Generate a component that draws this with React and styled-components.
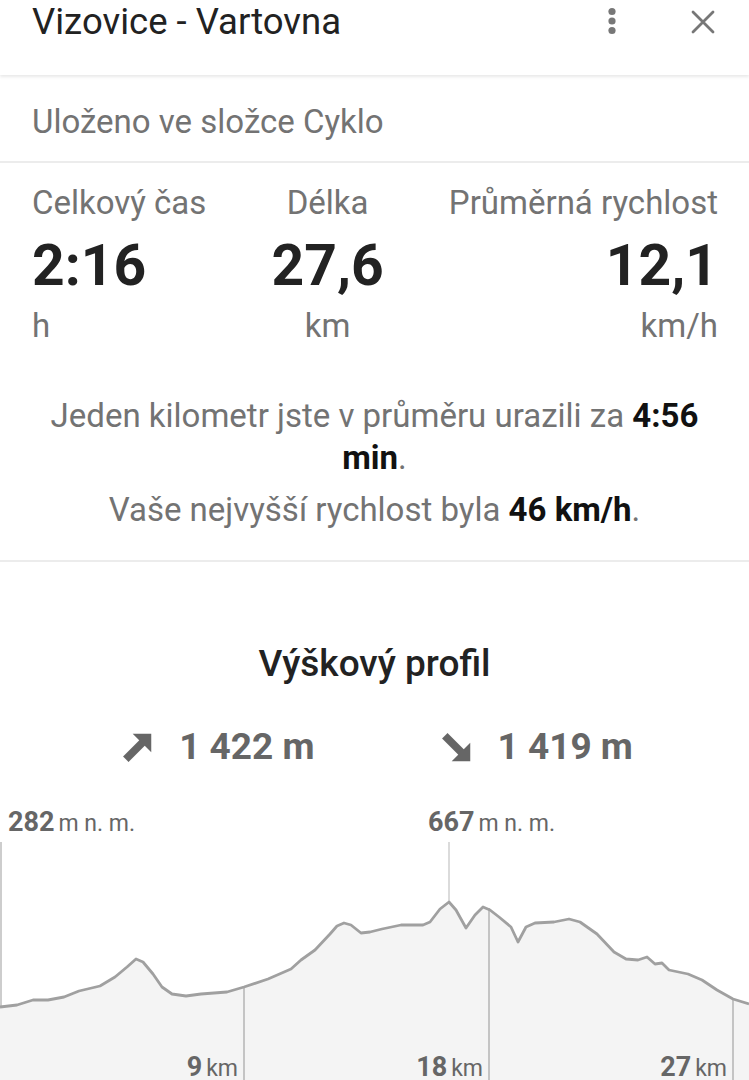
import React from "react";
import styled, { createGlobalStyle } from "styled-components";

const Global = createGlobalStyle`
  html, body {
    margin: 0;
    padding: 0;
    background: #fff;
  }
  body {
    font-family: Roboto, "Liberation Sans", sans-serif;
    -webkit-font-smoothing: antialiased;
  }
  #root {
    width: 749px;
    height: 1080px;
    overflow: hidden;
  }
`;

const Page = styled.div`
  width: 749px;
  height: 1080px;
  background: #fff;
`;

const Header = styled.header`
  height: 75px;
  display: flex;
  align-items: flex-start;
  padding: 0 0 0 32px;
  box-shadow: 0 2px 3px rgba(0, 0, 0, 0.09);
  position: relative;
  z-index: 1;
`;

const Title = styled.h1`
  flex: 1;
  margin: 0;
  font-size: 36.5px;
  font-weight: 400;
  line-height: 44px;
  color: #222;
`;

const IconButton = styled.button`
  width: 48px;
  height: 44px;
  border: 0;
  padding: 0;
  background: none;
  display: flex;
  align-items: center;
  justify-content: center;
  color: #777;
`;

const Actions = styled.div`
  display: flex;
  gap: 43px;
  margin-right: 22px;
`;

const Folder = styled.div`
  height: 88px;
  box-sizing: border-box;
  padding: 6px 32px 0;
  display: flex;
  align-items: center;
  font-size: 33px;
  color: #737373;
  border-bottom: 2px solid #ececec;
`;

const Stats = styled.div`
  display: flex;
  justify-content: space-between;
  padding: 20px 31px 0 32px;
`;

const Stat = styled.div`
  display: flex;
  flex-direction: column;
  align-items: ${(p) => p.$align};
`;

const StatLabel = styled.div`
  font-size: 33px;
  line-height: 40px;
  color: #737373;
`;

const StatValue = styled.div`
  font-size: 57px;
  font-weight: 700;
  line-height: 66px;
  margin-top: 10px;
  color: #222;
`;

const StatUnit = styled.div`
  font-size: 33px;
  line-height: 40px;
  margin-top: 7px;
  color: #737373;
`;

const Summary = styled.div`
  padding: 49px 36px 29px;
  text-align: center;
  border-bottom: 2px solid #ececec;
`;

const Line = styled.p`
  margin: ${(p) => (p.$first ? "0" : "10px 0 0")};
  font-size: 33px;
  line-height: 42px;
  color: #737373;

  b {
    color: #111;
    font-weight: 700;
  }
`;

const Profile = styled.section`
  padding-top: 80px;
`;

const ProfileTitle = styled.h2`
  margin: 0;
  text-align: center;
  font-size: 37px;
  font-weight: 500;
  line-height: 44px;
  color: #222;
`;

const Climb = styled.div`
  margin-top: 39px;
  display: flex;
  justify-content: center;
  gap: 125px;
  padding-left: 5px;
`;

const ClimbItem = styled.div`
  display: flex;
  align-items: center;
  gap: 25px;
  font-size: 37px;
  font-weight: 700;
  line-height: 44px;
  color: #666;
`;

const Chart = styled.div`
  position: relative;
  margin-top: 33px;
  height: 275px;
`;

const Svg = styled.svg`
  position: absolute;
  left: 0;
  top: 40px;
  display: block;
`;

const Tag = styled.div`
  position: absolute;
  left: ${(p) => p.$x}px;
  top: ${(p) => p.$y}px;
  white-space: nowrap;
  color: #666;
  font-size: 23px;
  line-height: 30px;

  b {
    font-size: 27px;
    font-weight: 700;
    margin-right: 4px;
  }
`;

const KmTag = styled(Tag)`
  left: auto;
  right: ${(p) => 749 - p.$x}px;
`;

const Dots = () => (
  <svg width="10" height="30" viewBox="0 0 10 30">
    <circle cx="5" cy="4.5" r="3.6" fill="#777" />
    <circle cx="5" cy="14" r="3.6" fill="#777" />
    <circle cx="5" cy="23.5" r="3.6" fill="#777" />
  </svg>
);

const Close = () => (
  <svg width="24" height="24" viewBox="0 0 24 24">
    <path d="M2 2 L22 22 M22 2 L2 22" stroke="#777" strokeWidth="2.8" strokeLinecap="round" />
  </svg>
);

const Arrow = ({ down }) => (
  <svg width="33" height="33" viewBox="0 0 24 24" style={{ transform: down ? "scaleY(-1)" : undefined }}>
    <polygon points="8.5,2 22,2 22,15.5" fill="#666" />
    <path d="M3.5 20.5 L16 8" stroke="#666" strokeWidth="5.6" />
  </svg>
);

const profile = [
  [0, 165], [17, 163], [33, 158], [48, 158], [64, 155], [79, 149], [100, 144],
  [115, 135], [127, 125], [136, 117], [143, 120], [153, 132], [162, 145], [172, 152],
  [186, 154], [201, 152], [227, 150], [244, 145], [268, 137], [291, 127], [301, 118],
  [315, 108], [330, 92], [337, 84], [344, 81], [351, 83], [361, 91], [370, 90],
  [382, 87], [401, 83], [423, 83], [430, 80], [440, 67], [449, 60], [456, 68],
  [466, 86], [475, 73], [483, 65], [490, 68], [499, 75], [511, 85], [518, 100],
  [526, 85], [535, 81], [554, 80], [569, 77], [580, 80], [597, 92], [614, 110],
  [626, 117], [638, 118], [647, 115], [655, 122], [662, 121], [669, 128], [688, 132],
  [702, 138], [717, 148], [733, 157], [749, 162],
];

const linePath = "M" + profile.map(([x, y]) => `${x} ${y}`).join(" L");
const areaPath = `${linePath} L749 240 L0 240 Z`;

const marks = [
  { x: 244, y: 145 },
  { x: 489, y: 66 },
  { x: 733, y: 157 },
];

export default function App() {
  return (
    <Page>
      <Global />
      <Header>
        <Title>Vizovice - Vartovna</Title>
        <Actions>
          <IconButton aria-label="Více">
            <Dots />
          </IconButton>
          <IconButton aria-label="Zavřít">
            <Close />
          </IconButton>
        </Actions>
      </Header>

      <Folder>Uloženo ve složce Cyklo</Folder>

      <Stats>
        <Stat $align="flex-start">
          <StatLabel>Celkový čas</StatLabel>
          <StatValue>2:16</StatValue>
          <StatUnit>h</StatUnit>
        </Stat>
        <Stat $align="center">
          <StatLabel>Délka</StatLabel>
          <StatValue>27,6</StatValue>
          <StatUnit>km</StatUnit>
        </Stat>
        <Stat $align="flex-end">
          <StatLabel>Průměrná rychlost</StatLabel>
          <StatValue>12,1</StatValue>
          <StatUnit>km/h</StatUnit>
        </Stat>
      </Stats>

      <Summary>
        <Line $first>
          Jeden kilometr jste v průměru urazili za <b>4:56 min</b>.
        </Line>
        <Line>
          Vaše nejvyšší rychlost byla <b>46 km/h</b>.
        </Line>
      </Summary>

      <Profile>
        <ProfileTitle>Výškový profil</ProfileTitle>
        <Climb>
          <ClimbItem>
            <Arrow />
            1 422 m
          </ClimbItem>
          <ClimbItem>
            <Arrow down />
            1 419 m
          </ClimbItem>
        </Climb>

        <Chart>
          <Tag $x={8} $y={5}>
            <b>282</b>m n. m.
          </Tag>
          <Tag $x={428} $y={5}>
            <b>667</b>m n. m.
          </Tag>
          <Svg width="749" height="240" viewBox="0 0 749 240">
            <path d={areaPath} fill="#f4f4f4" />
            <line x1="1" y1="0" x2="1" y2="165" stroke="#bdbdbd" strokeWidth="1.5" />
            <line x1="449" y1="0" x2="449" y2="60" stroke="#cfcfcf" strokeWidth="1.5" />
            {marks.map((m) => (
              <line key={m.x} x1={m.x} y1={m.y} x2={m.x} y2="240" stroke="#b5b5b5" strokeWidth="1.5" />
            ))}
            <path d={linePath} fill="none" stroke="#a0a0a0" strokeWidth="2.8" strokeLinejoin="round" />
          </Svg>
          <KmTag $x={238} $y={250}>
            <b>9</b>km
          </KmTag>
          <KmTag $x={483} $y={250}>
            <b>18</b>km
          </KmTag>
          <KmTag $x={727} $y={250}>
            <b>27</b>km
          </KmTag>
        </Chart>
      </Profile>
    </Page>
  );
}
